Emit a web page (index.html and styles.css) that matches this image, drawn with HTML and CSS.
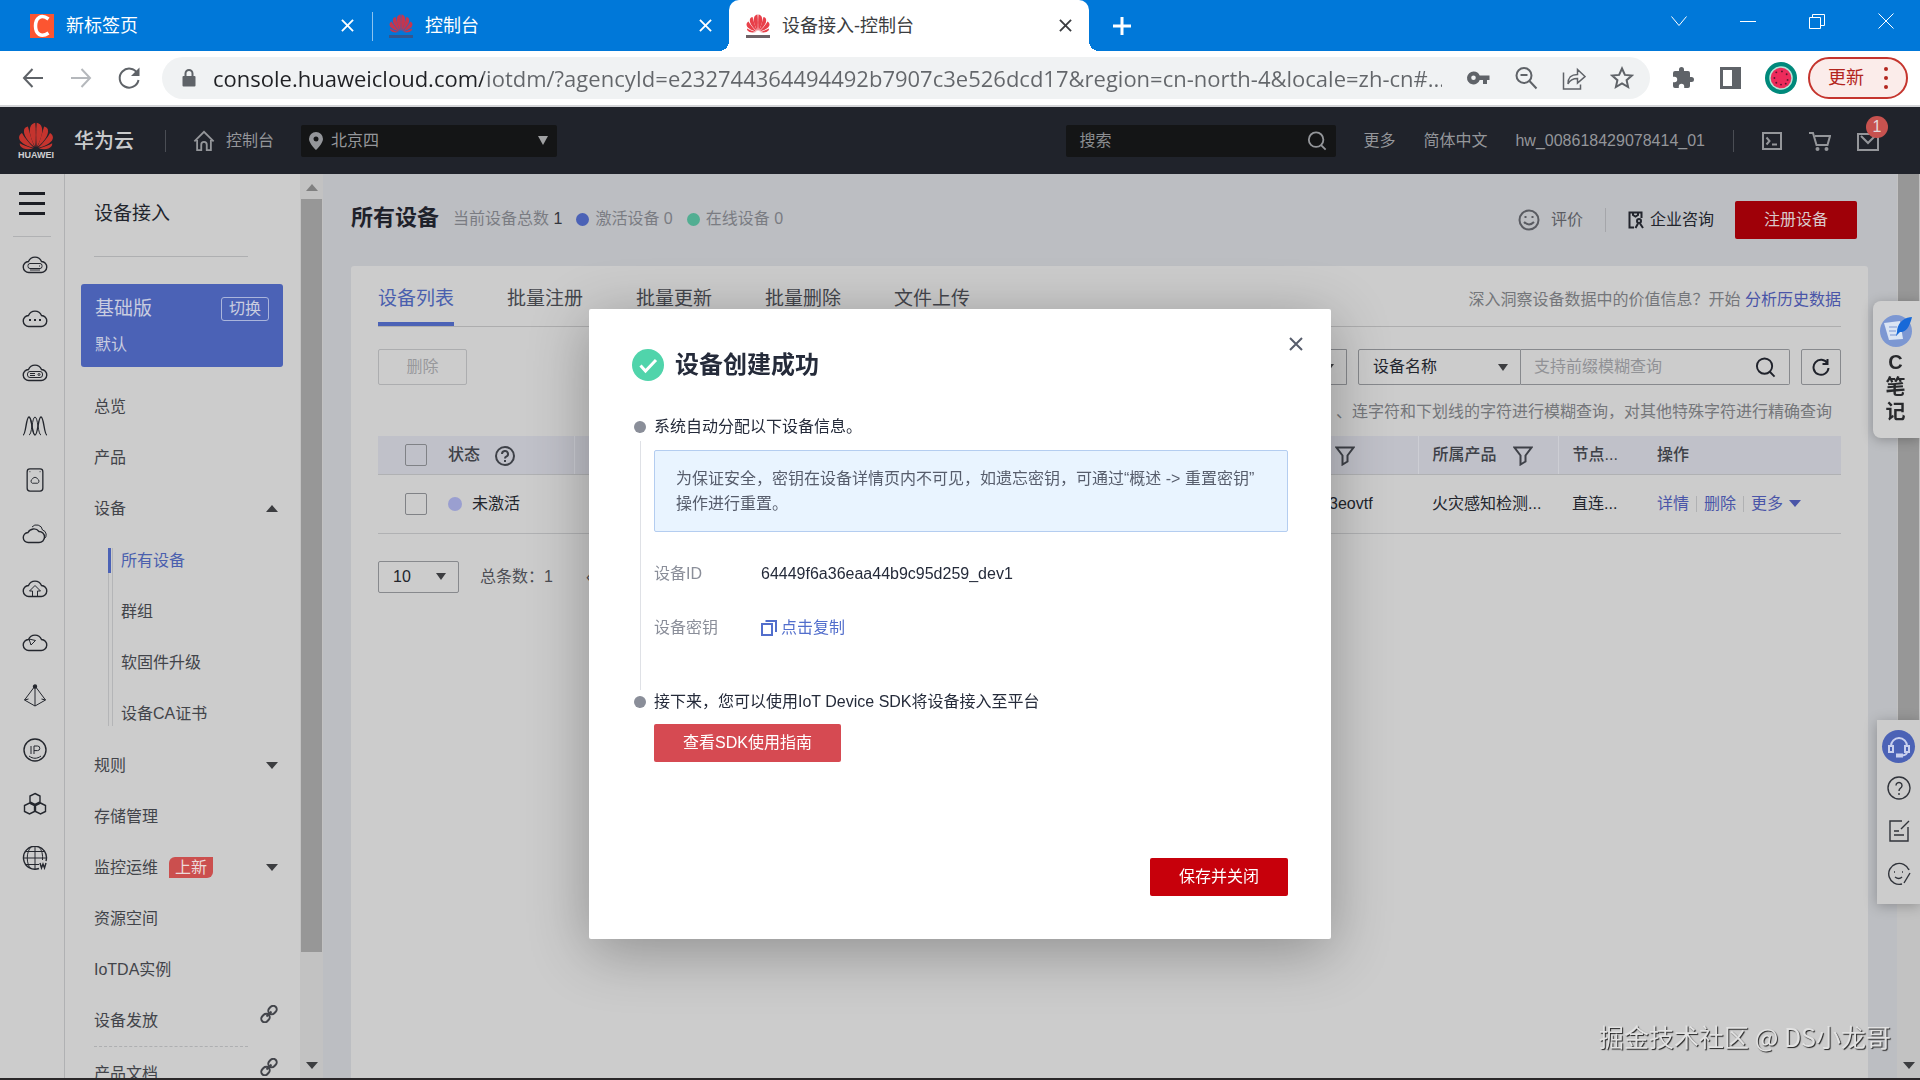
FILE: index.html
```html
<!DOCTYPE html>
<html lang="zh-CN">
<head>
<meta charset="utf-8">
<title>设备接入-控制台</title>
<meta name="viewport" content="width=device-width, initial-scale=1">
<link rel="stylesheet" href="styles.css">
</head>
<body>
<svg class="sprite" aria-hidden="true">
  <symbol id="huawei" viewBox="0 0 48 38">
    <g transform="translate(24 37)">
      <path d="M-1-3C-6-12-11-25-7-32-5-35-2-36-1-36 0-26 0-14-1-3Z"/>
      <path d="M1-3C6-12 11-25 7-32 5-35 2-36 1-36 0-26 0-14 1-3Z"/>
      <path d="M-2-3C-12-11-18-20-16-27-15-30-12-31-11-31-9-24-6-13-2-3Z"/>
      <path d="M2-3C12-11 18-20 16-27 15-30 12-31 11-31 9-24 6-13 2-3Z"/>
      <path d="M-3-2C-15-5-23-10-23-16-23-19-21-21-19-22-16-16-10-9-3-2Z"/>
      <path d="M3-2C15-5 23-10 23-16 23-19 21-21 19-22 16-16 10-9 3-2Z"/>
      <path d="M-4-1C-11 1-18 0-21-4-22-5-22-7-22-8-17-5-11-3-4-1Z"/>
      <path d="M4-1C11 1 18 0 21-4 22-5 22-7 22-8 17-5 11-3 4-1Z"/>
    </g>
  </symbol>
  <symbol id="x" viewBox="0 0 14 14"><path d="M1 1l12 12M13 1L1 13"/></symbol>
  <symbol id="filter" viewBox="0 0 20 20"><path d="M1.500 1.500h17l-6 8v6l-5 3v-9z"/></symbol>
  <symbol id="search" viewBox="0 0 22 22"><circle cx="10" cy="9.500" r="8"/><path d="M15.500 15.500l5 5"/></symbol>
  <symbol id="link" viewBox="0 0 18 18"><rect x="8" y="1.500" width="9" height="7" rx="3.500" transform="rotate(-45 12.500 5)"/><rect x="1" y="9.500" width="9" height="7" rx="3.500" transform="rotate(-45 5.500 13)"/><path d="M6.500 11.500l5-5"/></symbol>
  <symbol id="cloud" viewBox="0 0 28 24"><path d="M8 20.500a5.500 5.500 0 0 1-.500-11A7 7 0 0 1 20.500 9.500a5.500 5.500 0 0 1-.500 11z"/></symbol>
</svg>

<header class="browser">
  <div class="tabs">
    <div class="tab">
      <svg class="fav" viewBox="0 0 24 24"><path fill="#fc5531" d="M0 0h24v24H0z"/><path fill="none" stroke="#fff" stroke-width="3.500" d="M18.500 5C11-.500 5.500 4 5.500 12s5.500 12 13 7"/></svg>
      <span class="tab-name">新标签页</span>
      <button class="tab-close" aria-label="关闭标签页"><svg><use href="#x"/></svg></button>
    </div>
    <div class="tab split">
      <span class="fav brand dim"><svg><use href="#huawei"/></svg><i></i></span>
      <span class="tab-name">控制台</span>
      <button class="tab-close" aria-label="关闭标签页"><svg><use href="#x"/></svg></button>
    </div>
    <div class="tab active">
      <span class="fav brand"><svg><use href="#huawei"/></svg><i></i></span>
      <span class="tab-name">设备接入-控制台</span>
      <button class="tab-close" aria-label="关闭标签页"><svg><use href="#x"/></svg></button>
    </div>
    <button class="new-tab" aria-label="新建标签页"><svg viewBox="0 0 18 18"><path d="M9 0v18M0 9h18"/></svg></button>
    <div class="window-buttons">
      <button aria-label="搜索标签页"><svg viewBox="0 0 16 16"><path d="M.500 3.500l7.500 9 7.500-9"/></svg></button>
      <button aria-label="最小化"><svg viewBox="0 0 16 16"><path d="M0 8.500h16"/></svg></button>
      <button aria-label="还原"><svg viewBox="0 0 16 16"><path d="M.500 4.500h11v11H.500zM3.500 4V1.500h12v11H12"/></svg></button>
      <button aria-label="关闭"><svg viewBox="0 0 16 16"><path d="M.500.500l15 15M15.500.500l-15 15"/></svg></button>
    </div>
  </div>
  <div class="toolbar">
    <button class="tool" aria-label="后退"><svg viewBox="0 0 24 24"><path d="M22 12H3M11.500 3L3 12l8.500 9"/></svg></button>
    <button class="tool off" aria-label="前进"><svg viewBox="0 0 24 24"><path d="M2 12h19M12.500 3l8.500 9-8.500 9"/></svg></button>
    <button class="tool" aria-label="刷新"><svg viewBox="0 0 24 24"><path d="M20.500 7.500A9.500 9.500 0 1 0 21.500 14"/><path class="solid" d="M22.500 1.500v8.500h-8.500z"/></svg></button>
    <div class="omnibox">
      <svg class="lock" viewBox="0 0 14 18"><path d="M1.500 7h11q1 0 1 1v8.500q0 1-1 1h-11q-1 0-1-1V8q0-1 1-1z"/><path class="shackle" d="M3.500 8V4.500a3.500 3.500 0 0 1 7 0V8"/></svg>
      <input class="url" aria-label="地址" value="console.huaweicloud.com/iotdm/?agencyId=e232744364494492b7907c3e526dcd17&amp;region=cn-north-4&amp;locale=zh-cn#...">
      <button class="tool" aria-label="密码"><svg viewBox="0 0 24 24"><path class="solid" fill-rule="evenodd" d="M7.500 5.500a6.500 6.500 0 1 0 6.200 8.500H17v4h4v-4h2.500V9.500h-9.800a6.500 6.500 0 0 0-6.200-4zm0 4a2.300 2.300 0 1 1 0 4.600 2.300 2.300 0 0 1 0-4.600z"/></svg></button>
      <button class="tool" aria-label="缩放"><svg viewBox="0 0 24 24"><circle cx="10" cy="9.500" r="7.500"/><path d="M15.500 15l7 7.500M6.500 9h7"/></svg></button>
      <button class="tool thin" aria-label="分享"><svg viewBox="0 0 24 24"><path d="M1.500 6.500V23h17v-4.500M6 18c0-7 3-9.500 9.500-9.500V3.500l7.500 7-7.500 6.500v-4.500C10.500 12.500 8 14 6 18z"/></svg></button>
      <button class="tool" aria-label="收藏"><svg viewBox="0 0 24 24"><path d="M12 2.500l2.900 6.400 7 .7-5.300 4.600 1.500 6.800-6.100-3.600L5.900 21l1.500-6.800L2.100 9.600l7-.7z"/></svg></button>
    </div>
    <div class="extensions">
      <button class="tool" aria-label="扩展程序"><svg viewBox="0 0 24 24"><path class="solid" d="M20.500 11H19V7a2 2 0 0 0-2-2h-4V3.500a2.500 2.500 0 0 0-5 0V5H4a2 2 0 0 0-2 2v3.800h1.500a2.700 2.700 0 0 1 0 5.400H2V20a2 2 0 0 0 2 2h3.800v-1.500a2.700 2.700 0 0 1 5.400 0V22H17a2 2 0 0 0 2-2v-4h1.500a2.500 2.500 0 0 0 0-5z"/></svg></button>
      <button class="tool" aria-label="侧边栏"><svg viewBox="0 0 24 24"><path class="solid" fill-rule="evenodd" d="M2 1h21v22H2zM5 4v16h9V4z"/></svg></button>
      <button class="avatar" aria-label="用户"><svg viewBox="0 0 34 34"><circle cx="17" cy="17" r="17" fill="#00897b"/><circle cx="17" cy="17" r="12.500" fill="#b8e6d8"/><circle cx="17" cy="17" r="11" fill="#ed2b5b"/><g fill="#5b1630"><circle cx="12" cy="11" r="1"/><circle cx="18" cy="10" r="1"/><circle cx="23" cy="13" r="1"/><circle cx="10" cy="17" r="1"/><circle cx="24" cy="19" r="1"/><circle cx="12" cy="22" r="1"/><circle cx="17" cy="24" r="1"/><circle cx="22" cy="23" r="1"/></g></svg></button>
      <button class="update">更新<i></i></button>
    </div>
  </div>
</header>

<header class="console-bar">
  <a class="logo" href="#"><span class="logo-mark"><svg><use href="#huawei"/></svg><b>HUAWEI</b></span><strong>华为云</strong></a>
  <a class="home" href="#"><svg viewBox="0 0 24 24"><path d="M1.500 12.500L12 2l10.500 10.500M4.500 11v11h4.500v-6a3 3 0 0 1 6 0v6h4.500V11"/></svg>控制台</a>
  <label class="region">
    <svg viewBox="0 0 14 18"><path fill-rule="evenodd" d="M7 0a7 7 0 0 0-7 7c0 4.500 7 11 7 11s7-6.500 7-11a7 7 0 0 0-7-7zm0 4.500a2.500 2.500 0 1 1 0 5 2.500 2.500 0 0 1 0-5z"/></svg>
    <select aria-label="区域"><option>北京四</option></select>
  </label>
  <div class="global-search"><input type="text" placeholder="搜索" aria-label="搜索"><svg><use href="#search"/></svg></div>
  <nav class="links"><a href="#">更多</a><a href="#">简体中文</a><a href="#">hw_008618429078414_01</a></nav>
  <div class="bar-icons">
    <a href="#" aria-label="命令行"><svg viewBox="0 0 22 22"><path d="M2 3h18v16H2zM5.500 7.500L8.500 11l-3 3.500M11 14.500h5"/></svg></a>
    <a href="#" aria-label="费用"><svg viewBox="0 0 22 22"><path d="M0 3h4l3.500 12h11L21 6H6"/><circle cx="8.500" cy="19" r="1"/><circle cx="17.500" cy="19" r="1"/></svg></a>
    <a href="#" aria-label="消息"><svg viewBox="0 0 22 22"><path d="M1 4h20v16H1zM4 6l7 7 7-7"/></svg><em>1</em></a>
  </div>
</header>

<div class="workspace">
  <nav class="rail" aria-label="服务">
    <button class="menu" aria-label="服务列表"><i></i><i></i><i></i></button>
    <a href="#" aria-label="云服务器"><svg viewBox="0 0 28 24"><use href="#cloud"/><g class="fine"><rect x="7" y="11.500" width="14" height="5" rx="2"/><path d="M18 14h1M9 18h10"/></g></svg></a>
    <a href="#" aria-label="更多云"><svg viewBox="0 0 28 24"><use href="#cloud"/><path class="dots" d="M8 14h2M13 14h2M18 14h2"/></svg></a>
    <a href="#" aria-label="云硬盘"><svg viewBox="0 0 28 24"><use href="#cloud"/><g class="fine"><rect x="6.500" y="11.500" width="15" height="6" rx="2.500"/><circle cx="18" cy="14.500" r="1"/><path d="M9 13.500h5M9 15.500h5"/></g></svg></a>
    <a href="#" aria-label="弹性伸缩"><svg viewBox="0 0 28 24"><path d="M2 21C5 21 5 3 8 3s3 18 6 18 3-18 6-18 3 18 6 18"/><path class="fine" d="M8 21c3 0 3-18 6-18s3 18 6 18M8 3c3 0 3 18 6 18"/></svg></a>
    <a href="#" aria-label="镜像"><svg viewBox="0 0 28 26"><rect x="5.500" y="1" width="17" height="24" rx="3"/><path class="fine" d="M8 4h1M19 4h1M11 16.500a2.500 2.500 0 0 1 .200-4.500 3 3 0 0 1 5.600 0 2.500 2.500 0 0 1 .200 4.500z"/></svg></a>
    <a href="#" aria-label="双云"><svg viewBox="0 0 28 24"><path d="M7.500 20.500a5 5 0 0 1-.500-10A6.500 6.500 0 0 1 18 9.500a5.500 5.500 0 0 1 0 11z"/><path class="fine" d="M11 5a6 6 0 0 1 10.500 3A5 5 0 0 1 23 17"/></svg></a>
    <a href="#" aria-label="上传"><svg viewBox="0 0 28 24"><use href="#cloud"/><path class="fine" d="M11.500 20.500V15H8.500L14 9.500l5.500 5.500h-3v5.500"/></svg></a>
    <a href="#" aria-label="监控"><svg viewBox="0 0 28 24"><use href="#cloud"/><path class="fine" d="M8 9l6.500 1.500L10 15z"/></svg></a>
    <a href="#" aria-label="网络"><svg viewBox="0 0 28 24"><path class="fine" d="M14 2L3.500 16 14 22l10.500-6zM14 2v20M3.500 16l4-1M24.500 16l-4-1"/><circle class="fill" cx="14" cy="2.500" r="1.500"/></svg></a>
    <a href="#" aria-label="弹性公网"><svg viewBox="0 0 28 24"><circle cx="14" cy="12" r="11"/><path class="fine" d="M10 8v8M13 16V8h3.500a2.300 2.300 0 0 1 0 4.600H13M8 18c4 3 8 3 12 0"/></svg></a>
    <a href="#" aria-label="区块链"><svg viewBox="0 0 28 24"><path d="M14 1.500l5 2.500v6l-5 2.500L9 10V4zM8.500 11l5 2.500v6l-5 2.500-5-2.500v-6zM19.500 11l5 2.500v6l-5 2.500-5-2.500v-6z"/></svg></a>
    <a href="#" aria-label="域名"><svg viewBox="0 0 28 24"><path d="M18 22.500A11.500 11.500 0 1 1 25 15"/><path class="fine" d="M14 .500v23M10 23C5 18 5 6 10 1M18 1c3 3 4 8 3.500 13M3 12h22M5 5.500h18M5 18.500h13"/><path d="M19 17l1.500 5 1.500-4 1.500 4 1.500-5"/></svg></a>
  </nav>

  <aside class="side">
    <h2>设备接入</h2>
    <section class="edition"><strong>基础版</strong><button>切换</button><span>默认</span></section>
    <ul class="menu-list">
      <li><a href="#">总览</a></li>
      <li><a href="#">产品</a></li>
      <li><a href="#">设备<i class="tri up"></i></a>
        <ul>
          <li class="current"><a href="#">所有设备</a></li>
          <li><a href="#">群组</a></li>
          <li><a href="#">软固件升级</a></li>
          <li><a href="#">设备CA证书</a></li>
        </ul>
      </li>
      <li><a href="#">规则<i class="tri"></i></a></li>
      <li><a href="#">存储管理</a></li>
      <li><a href="#">监控运维<b class="new">上新</b><i class="tri"></i></a></li>
      <li><a href="#">资源空间</a></li>
      <li><a href="#">IoTDA实例</a></li>
      <li><a href="#">设备发放<svg><use href="#link"/></svg></a></li>
      <li class="ruled"><a href="#">产品文档<svg><use href="#link"/></svg></a></li>
    </ul>
  </aside>
  <div class="scroll"><i class="tri up"></i><span></span><i class="tri"></i></div>

  <main>
    <div class="page-head">
      <h1>所有设备</h1>
      <p class="stats"><span>当前设备总数 <b>1</b></span><span class="dot blue">激活设备 0</span><span class="dot green">在线设备 0</span></p>
      <div class="head-actions">
        <a class="rate" href="#"><svg viewBox="0 0 22 22"><circle cx="11" cy="11" r="9.500"/><path d="M7.500 7v2M14.500 7v2M6 13q5 5 10 0"/></svg>评价</a>
        <a class="consult" href="#"><svg viewBox="0 0 16 18"><path d="M6 16.500H1.500v-15h12V7M5 2v2l2.500 1.500L10 4V2"/><circle cx="11" cy="10" r="2"/><path d="M7.500 17l2.500-4.500M12 12.500l3 4.500"/></svg>企业咨询</a>
        <button class="primary deep">注册设备</button>
      </div>
    </div>
    <section class="panel">
      <div class="panel-tabs">
        <a class="on" href="#">设备列表</a><a href="#">批量注册</a><a href="#">批量更新</a><a href="#">批量删除</a><a href="#">文件上传</a>
        <p>深入洞察设备数据中的价值信息？开始 <a href="#">分析历史数据</a></p>
      </div>
      <div class="filters">
        <button class="ghost" disabled>删除</button>
        <label class="pick first"><select aria-label="状态"><option></option></select></label>
        <label class="pick"><select aria-label="查询字段"><option>设备名称</option></select></label>
        <div class="query"><input type="text" placeholder="支持前缀模糊查询" aria-label="查询"><svg><use href="#search"/></svg></div>
        <button class="refresh" aria-label="刷新"><svg viewBox="0 0 18 18"><path d="M15.500 5.500A7.500 7.500 0 1 0 16.500 10M15.500 1v5h-5"/></svg></button>
      </div>
      <p class="hint">、连字符和下划线的字符进行模糊查询，对其他特殊字符进行精确查询</p>
      <table>
        <colgroup><col class="c-check"><col class="c-state"><col><col class="c-id"><col class="c-product"><col class="c-node"><col class="c-ops"></colgroup>
        <thead><tr>
          <th><input type="checkbox" aria-label="全选"></th>
          <th>状态<svg class="help" viewBox="0 0 20 20"><circle cx="10" cy="10" r="9"/><path d="M7 8a3 3 0 1 1 4.200 2.700Q10 11.300 10 12.500M10 14v2"/></svg></th>
          <th></th>
          <th><svg class="funnel lead"><use href="#filter"/></svg></th>
          <th>所属产品<svg class="funnel"><use href="#filter"/></svg></th>
          <th>节点...</th>
          <th>操作</th>
        </tr></thead>
        <tbody><tr>
          <td><input type="checkbox" aria-label="选择设备"></td>
          <td><span class="state">未激活</span></td>
          <td></td>
          <td>3eovtf</td>
          <td>火灾感知检测...</td>
          <td>直连...</td>
          <td class="ops"><a href="#">详情</a><a href="#">删除</a><a href="#">更多<i class="tri"></i></a></td>
        </tr></tbody>
      </table>
      <div class="pager">
        <label class="pick small"><select aria-label="每页条数"><option>10</option></select></label>
        <span>总条数：1</span>
        <button aria-label="上一页">‹</button>
      </div>
    </section>
  </main>
  <div class="scroll page-scroll"><span></span><i class="tri"></i></div>
</div>

<div class="overlay">
  <section class="dialog" role="dialog" aria-labelledby="dialog-title">
    <button class="dismiss" aria-label="关闭"><svg><use href="#x"/></svg></button>
    <h2 id="dialog-title"><svg viewBox="0 0 32 32"><circle cx="16" cy="16" r="16"/><path d="M8.500 16.500l5 5.500L24 11"/></svg>设备创建成功</h2>
    <ol>
      <li>
        <h3>系统自动分配以下设备信息。</h3>
        <p class="notice">为保证安全，密钥在设备详情页内不可见，如遗忘密钥，可通过“概述 -&gt; 重置密钥”操作进行重置。</p>
        <dl>
          <dt>设备ID</dt><dd>64449f6a36eaa44b9c95d259_dev1</dd>
          <dt>设备密钥</dt><dd><a href="#"><svg viewBox="0 0 16 16"><path d="M1 4h10v11H1zM4.500 1H15v11"/></svg>点击复制</a></dd>
        </dl>
      </li>
      <li>
        <h3>接下来，您可以使用IoT Device SDK将设备接入至平台</h3>
        <button class="primary soft">查看SDK使用指南</button>
      </li>
    </ol>
    <footer><button class="primary">保存并关闭</button></footer>
  </section>
</div>

<button class="notes">
  <svg viewBox="0 0 32 32"><circle cx="16" cy="16" r="16" fill="#7c97d2"/><path fill="#dbe5f4" d="M4 8l16-2 3 18-14 1z"/><path stroke="#7c97d2" d="M9 12h8M9 16h7M10 20h7"/><path fill="#1769d8" d="M32 2c-8 0-15 6-15 15l-1 4 4-4c7 0 10-7 12-15z"/></svg>
  <span>C</span><span>笔</span><span>记</span>
</button>
<div class="support">
  <button class="agent" aria-label="客服"><svg viewBox="0 0 22 22"><path d="M3 10a8 8 0 0 1 16 0M1 10h4v6H1zM17 10h4v6h-4zM19 16q0 3-5 3.500M9 18.500h5v2H9z"/></svg></button>
  <button aria-label="帮助"><svg viewBox="0 0 24 24"><circle cx="12" cy="12" r="11"/><path d="M9 9.500a3 3 0 1 1 4.500 2.600Q12 13 12 15M12 17v2"/></svg></button>
  <button aria-label="建议"><svg viewBox="0 0 24 24"><path d="M15 2H3v20h18V8M22 2l-8 8M7 12h5M7 16h10"/></svg></button>
  <button aria-label="评价"><svg viewBox="0 0 24 24"><path d="M17 21l6-10M22 8A10.500 10.500 0 1 0 15 22M7 10h1M15 10h1M8 15q4 3 7 0"/></svg></button>
</div>
<p class="watermark">掘金技术社区 @ DS小龙哥</p>
</body>
</html>
```
FILE: styles.css
```css
* { box-sizing: border-box; }
body, h1, h2, h3, p, ul, ol, dl, dd { margin: 0; padding: 0; }
body {
  display: flex;
  flex-direction: column;
  height: 100vh;
  overflow: hidden;
  border-bottom: 2px solid #2a2729;
  background: #bcbec2;
  color: #1f222b;
  font: 16px/24px "Liberation Sans", "Noto Sans CJK SC", sans-serif;
}
ul, ol { list-style: none; }
a { color: inherit; text-decoration: none; }
button, input, select { font: inherit; color: inherit; background: none; border: 0; padding: 0; margin: 0; outline: 0; }
svg { display: block; fill: none; stroke: currentColor; flex: none; }
.sprite { position: absolute; width: 0; height: 0; }
.tri { flex: none; border: 6px solid transparent; border-top: 7px solid #3c3d40; border-bottom: 0; }
.tri.up { border-top: 0; border-bottom: 7px solid #3c3d40; }

/* Browser window */
.tabs { display: flex; height: 51px; padding-left: 13px; background: #0078d9; color: #fff; }
.tab { position: relative; display: flex; align-items: center; gap: 12px; flex: 0 1 358px; height: 51px; padding: 0 17px; font-size: 18px; }
.fav { width: 24px; height: 24px; stroke: none; }
.brand { display: flex; flex-direction: column; gap: 2px; color: #e8404a; }
.brand svg { width: 24px; height: 19px; fill: currentColor; stroke: none; }
.brand i { height: 3px; background: #6d6266; }
.brand.dim { color: #c33650; }
.brand.dim i { background: #33568f; }
.tab-name { flex: 1; }
.tab-close svg { width: 13px; height: 13px; stroke-width: 2; }
.split { border-left: 1px solid transparent; }
.split::before { content: ""; position: absolute; left: 0; top: 12px; width: 1px; height: 29px; background: #8cc3ef; }
.active { background: #fff; color: #3b3d40; border-radius: 10px 10px 0 0; flex-basis: 360px; }
.active::before, .active::after { content: ""; position: absolute; bottom: 0; width: 10px; height: 10px; }
.active::before { right: 100%; background: radial-gradient(circle at 0 0, #0078d9 10px, #fff 10px); }
.active::after { left: 100%; background: radial-gradient(circle at 100% 0, #0078d9 10px, #fff 10px); }
.new-tab { margin-left: 24px; }
.new-tab svg { width: 18px; height: 18px; stroke-width: 3; }
.window-buttons { display: flex; margin-left: auto; height: 42px; }
.window-buttons button { display: grid; place-items: center; width: 69px; }
.window-buttons svg { width: 16px; height: 16px; }
.toolbar { display: flex; align-items: center; height: 56px; padding: 0 12px 0 21px; gap: 24px; background: #fff; border-bottom: 2px solid #d4d5d8; }
.tool { color: #5f6368; }
.tool svg { width: 24px; height: 24px; stroke-width: 2; }
.tool.thin svg { stroke-width: 1.5; }
.tool .solid { fill: currentColor; stroke: none; }
.tool.off { color: #b5b8bc; }
.omnibox { display: flex; align-items: center; gap: 24px; flex: 1; height: 42px; margin-left: -3px; padding: 0 16px 0 20px; border-radius: 21px; background: #f0f2f3; }
.lock { width: 14px; height: 18px; fill: #5f6368; stroke: none; }
.lock .shackle { fill: none; stroke: #5f6368; stroke-width: 2; }
.url { flex: 1; min-width: 0; height: 40px; margin-left: -7px; font-family: "Open Sans", sans-serif; font-size: 22px; color: transparent; background: linear-gradient(90deg, #202124 270px, #63666a 270px); background-clip: text; -webkit-background-clip: text; }
.extensions { display: flex; align-items: center; gap: 23px; margin-left: -3px; }
.avatar svg { width: 32px; height: 32px; stroke: none; }
.update { display: flex; align-items: center; justify-content: space-between; width: 100px; height: 42px; margin-left: -12px; padding: 0 18px; border: 2px solid #c5352e; border-radius: 21px; background: #fbecea; color: #b3261e; font-size: 18px; }
.update i { width: 4px; height: 4px; border-radius: 2px; background: currentColor; box-shadow: 0 -9px currentColor, 0 9px currentColor; }

/* Console bar */
.console-bar { display: flex; align-items: center; height: 67px; padding: 0 41px 0 18px; background: #20232b; color: #94969a; }
.logo { display: flex; align-items: center; gap: 20px; padding-right: 32px; position: relative; }
.logo-mark { display: flex; flex-direction: column; align-items: center; width: 36px; }
.logo-mark svg { width: 36px; height: 28px; fill: #c5342e; stroke: none; }
.logo-mark b { font-size: 9px; line-height: 10px; color: #d0d0d2; }
.logo strong { font-size: 20px; color: #c9cacc; font-weight: 500; }
.logo::after, .links::after { content: ""; position: absolute; right: 0; top: 50%; height: 22px; margin-top: -11px; border-right: 1px solid #4a4d54; }
.home { display: flex; align-items: center; gap: 11px; margin-left: 27px; }
.home svg { width: 22px; height: 22px; stroke-width: 2; }
.region { display: flex; align-items: center; position: relative; width: 256px; height: 32px; margin-left: 27px; padding: 0 9px 0 8px; gap: 8px; border-radius: 2px; background: #141516; }
.region svg { width: 14px; height: 18px; fill: currentColor; stroke: none; }
.region select { flex: 1; appearance: none; }
.region::after { content: ""; border: 5px solid transparent; border-top: 9px solid #a0a1a3; border-bottom: 0; }
.global-search { display: flex; align-items: center; width: 270px; height: 32px; margin-left: auto; padding: 0 9px 0 13px; border-radius: 2px; background: #141516; }
.global-search input, .query input { flex: 1; min-width: 0; }
.global-search input::placeholder { color: #8b8d90; opacity: 1; }
.global-search svg { width: 20px; height: 20px; stroke-width: 2; }
.links { display: flex; position: relative; gap: 28px; margin-left: 27px; padding-right: 29px; }
.bar-icons { display: flex; gap: 26px; margin-left: 27px; }
.bar-icons a { position: relative; }
.bar-icons svg { width: 22px; height: 22px; stroke-width: 2; }
.bar-icons em { position: absolute; left: 9px; top: -14px; width: 22px; height: 22px; border-radius: 11px; background: #c7524f; color: #e4dada; font-style: normal; line-height: 22px; text-align: center; }

/* Service rail */
.workspace { display: flex; flex: 1; min-height: 0; }
.rail { display: flex; flex-direction: column; align-items: center; flex: 0 0 65px; background: #ccc; border-right: 1px solid #b0b1b3; overflow: hidden; }
.rail a { display: grid; place-items: center; flex: 0 0 54px; padding-left: 6px; }
.rail svg { width: 28px; height: 24px; stroke: #24272e; stroke-width: 1.4; }
.rail .fine { stroke-width: 1; }
.rail .dots { stroke-width: 2; }
.rail .fill { fill: #24272e; }
.menu { display: flex; flex-direction: column; gap: 7px; width: 38px; height: 63px; flex: none; padding: 18px 6px 0; border-bottom: 1px solid #b0b1b3; }
.menu i { height: 3px; background: #1c1e24; }

/* Side menu */
.side { flex: 0 0 235px; overflow: hidden; background: #ccc; color: #42444a; }
.side h2 { margin: 0 52px 27px 29px; padding: 26px 0 28px; border-bottom: 1px solid #aeafb1; color: #22252d; font-size: 19px; line-height: 28px; font-weight: 400; }
.edition { display: grid; grid-template-columns: 1fr auto; align-items: center; row-gap: 12px; height: 83px; align-content: center; margin: 0 17px 0 16px; padding: 2px 14px 0; border-radius: 3px; background: #4b62b6; color: #c9cde0; }
.edition strong { font-size: 19px; font-weight: 400; }
.edition button { width: 48px; height: 24px; border: 1px solid #aab5dc; border-radius: 3px; line-height: 22px; }
.menu-list { padding-top: 14px; }
.menu-list a { display: flex; align-items: center; height: 51px; padding: 0 22px 0 29px; }
.menu-list a .tri, .menu-list svg { margin-left: auto; }
.menu-list svg { width: 18px; height: 18px; stroke-width: 2; margin-top: -14px; }
.menu-list ul { position: relative; padding: 1px 0; }
.menu-list ul::before { content: ""; position: absolute; left: 43px; top: 14px; bottom: 14px; width: 3px; border: solid #b4b5b7; border-width: 0 1px; }
.menu-list ul a { padding-left: 56px; }
.current { position: relative; color: #4a5fae; }
.current::before { content: ""; position: absolute; left: 43px; top: 13px; width: 3px; height: 25px; background: #4b62b6; }
.new { margin-left: 11px; padding: 0 6px; border-radius: 6px 0; background: #cb4f4e; color: #ecdada; font-weight: 400; line-height: 21px; }
.ruled { position: relative; padding-top: 2px; }
.ruled::before { content: ""; position: absolute; left: 29px; right: 52px; top: 0; border-top: 1px dashed #aeafb1; }
.scroll { display: flex; flex-direction: column; align-items: center; flex: 0 0 23px; padding: 10px 1px 9px; background: #c2c2c2; }
.scroll span { width: 21px; flex: 0 1 753px; margin-top: 8px; background: #979797; }
.scroll .tri.up { border-bottom-color: #808080; }
.scroll .tri:last-child { margin-top: auto; }
.page-scroll { padding-top: 0; }
.page-scroll span { flex-basis: 700px; margin: 0; }

/* Main page */
main { display: flex; flex-direction: column; flex: 1; min-width: 0; padding: 0 29px 0 28px; }
.page-head { display: flex; align-items: center; height: 92px; padding-right: 11px; }
.page-head h1 { margin-top: -4px; font-size: 22px; line-height: 28px; font-weight: 700; }
.stats { display: flex; gap: 14px; margin: -2px 0 0 14px; color: #7a7c82; }
.stats b { color: #33363d; font-weight: 400; }
.dot { display: flex; align-items: center; gap: 6px; white-space: pre; position: relative; }
.dot::before { content: ""; width: 13px; height: 13px; border-radius: 7px; background: #4b62b6; }
.green::before { background: #52ae92; }
.head-actions { display: flex; align-items: center; margin-left: auto; color: #5a5c62; }
.rate { display: flex; align-items: center; gap: 11px; padding-right: 22px; border-right: 1px solid #a5a6aa; }
.rate svg { width: 22px; height: 22px; stroke-width: 2; }
.consult { display: flex; align-items: center; gap: 6px; margin: 0 21px 0 22px; color: #22252d; }
.consult svg { width: 16px; height: 18px; stroke-width: 2; }
.primary { height: 38px; padding: 0 29px; border-radius: 2px; background: #c7000b; color: #fff; }
.deep { background: #9f0008; color: #d9c8ca; }
.panel { flex: 1; padding: 0 27px; background: #ccc; border-radius: 3px 3px 0 0; }
.panel-tabs { display: flex; gap: 53px; height: 61px; border-bottom: 1px solid #adadae; font-size: 19px; color: #44464c; }
.panel-tabs > a { padding-top: 21px; height: 60px; }
.panel-tabs .on { border-bottom: 4px solid #4b62b6; color: #4a5fae; }
.panel-tabs p { margin-left: auto; padding-top: 22px; font-size: 16px; color: #74767a; }
.panel-tabs p a { color: #4a55a8; }
.filters { display: flex; height: 36px; margin-top: 22px; }
.ghost { width: 89px; border: 1px solid #acadaf; border-radius: 2px; color: #98999c; }
.pick { display: flex; align-items: center; width: 163px; padding: 0 12px 0 14px; border: 1px solid #87898d; border-radius: 2px 0 0 2px; color: #22252d; }
.pick select { flex: 1; min-width: 0; appearance: none; }
.pick::after { content: ""; border: 5px solid transparent; border-top: 7px solid #3c3d40; border-bottom: 0; }
.first { width: 220px; margin: 0 11px 0 auto; }
.query { display: flex; align-items: center; width: 269px; padding: 0 13px; border: 1px solid #87898d; border-left: 0; border-radius: 0 2px 2px 0; }
.query input::placeholder { color: #919296; opacity: 1; }
.query svg { width: 21px; height: 21px; stroke-width: 2; }
.refresh { display: grid; place-items: center; width: 40px; margin-left: 11px; border: 1px solid #87898d; border-radius: 2px; }
.refresh svg { width: 18px; height: 18px; stroke-width: 2; }
.hint { margin: 15px 9px 12px 0; text-align: right; color: #74767a; }
table { width: 100%; table-layout: fixed; border-collapse: collapse; }
.c-check { width: 57px; }
.c-state { width: 139px; }
.c-id { width: 103px; }
.c-product { width: 140px; }
.c-node { width: 84px; }
.c-ops { width: 199px; }
th, td { padding: 0 0 0 14px; text-align: left; border-bottom: 1px solid #b0b1b3; white-space: nowrap; }
th { height: 38px; background: #c0c1c9; color: #3e4148; font-weight: 500; }
td { height: 59px; }
th:first-child, td:first-child { padding-left: 27px; }
th:nth-child(2), th:nth-child(4), th:nth-child(5) { border-right: 1px solid #cdced4; }
th:nth-child(2), td:nth-child(2) { padding-left: 13px; }
th:last-child, td:last-child { padding-left: 15px; }
input[type="checkbox"] { display: block; appearance: none; width: 22px; height: 22px; border: 1px solid #808286; border-radius: 2px; }
th svg { display: inline-block; vertical-align: middle; stroke-width: 2; }
.help { width: 20px; height: 20px; margin-left: 15px; }
.funnel { width: 20px; height: 20px; margin-left: 16px; }
.lead { margin-left: 6px; }
.state { display: flex; align-items: center; gap: 10px; }
.state::before { content: ""; width: 14px; height: 14px; border-radius: 7px; background: #9a9fd0; }
td, .state { color: #22252d; }
.ops a { display: inline-flex; align-items: center; gap: 6px; line-height: 16px; color: #4a55a8; }
.ops a + a { margin-left: 7px; padding-left: 7px; border-left: 1px solid #b0b1b3; }
.ops .tri { border-top-color: #4a55a8; }
.pager { display: flex; align-items: center; height: 32px; margin-top: 27px; color: #4c4e54; }
.small { width: 81px; height: 32px; border-radius: 2px; }
.pager span { margin: 0 33px 0 21px; }

/* Dialog */
.overlay { position: fixed; inset: 0; display: grid; place-items: center; padding-top: 168px; pointer-events: none; }
.dialog { position: relative; width: 742px; min-height: 630px; display: flex; flex-direction: column; padding: 40px 43px 43px; border-radius: 2px; background: #fff; box-shadow: 0 12px 60px rgba(0, 0, 0, .3); pointer-events: auto; color: #252b3a; }
.dismiss { position: absolute; right: 28px; top: 28px; color: #575d6c; }
.dismiss svg { width: 14px; height: 14px; stroke-width: 2; }
.dialog h2 { display: flex; align-items: center; gap: 11px; font-size: 24px; line-height: 32px; font-weight: 700; }
.dialog h2 svg { width: 32px; height: 32px; fill: #50d4ab; stroke: none; }
.dialog h2 path { fill: none; stroke: #fff; stroke-width: 3; }
.dialog ol { margin-top: 34px; }
.dialog li { position: relative; padding-left: 22px; }
.dialog h3 { font-size: 16px; font-weight: 400; line-height: 24px; }
.dialog li::before { content: ""; position: absolute; left: 2px; top: 6px; width: 12px; height: 12px; border-radius: 6px; background: #8a8e99; }
.dialog li:first-child { min-height: 275px; }
.dialog li:first-child::after { content: ""; position: absolute; left: 8px; top: 26px; bottom: 0; border-left: 1px solid #dfe1e6; }
.notice { margin-top: 11px; padding: 15px 21px; border: 1px solid #b4cdf0; border-radius: 2px; background: #e9f4ff; color: #575d6c; line-height: 25px; }
.dialog dl { display: grid; grid-template-columns: 107px 1fr; row-gap: 30px; margin-top: 30px; }
dt { color: #8a8e99; }
dd a { display: inline-flex; align-items: center; gap: 4px; color: #526ecc; }
dd svg { width: 16px; height: 16px; stroke-width: 2; }
.soft { display: block; margin-top: 10px; background: #d64a52; }
.dialog footer { margin-top: auto; text-align: right; }

/* Floating tools */
.notes { position: fixed; right: 0; top: 301px; display: flex; flex-direction: column; align-items: center; width: 47px; height: 137px; padding: 0 2px 0 0; border-radius: 8px 0 0 8px; background: #d0d0d0; box-shadow: 0 2px 12px rgba(0, 0, 0, .25); color: #28292c; font-size: 20px; line-height: 25px; font-weight: 700; }
.notes svg { width: 32px; height: 32px; margin: 14px 0 3px; stroke: none; }
.support { position: fixed; right: 0; top: 720px; display: flex; flex-direction: column; align-items: center; gap: 19px; width: 43px; height: 184px; padding-top: 10px; background: #ccc; box-shadow: 0 2px 12px rgba(0, 0, 0, .25); color: #30333a; }
.support svg { width: 24px; height: 24px; stroke-width: 1.4; }
.support .agent { display: grid; place-items: center; width: 33px; height: 33px; margin-bottom: -6px; border-radius: 17px; background: #4b62b6; color: #c9d0ee; }
.support .agent svg { width: 22px; height: 22px; stroke-width: 2; }
.watermark { position: fixed; right: 29px; bottom: 26px; font-family: "Noto Sans CJK SC", sans-serif; font-size: 25px; line-height: 36px; color: #e2e2e2; text-shadow: 1px 1px 1px #222; }
```
